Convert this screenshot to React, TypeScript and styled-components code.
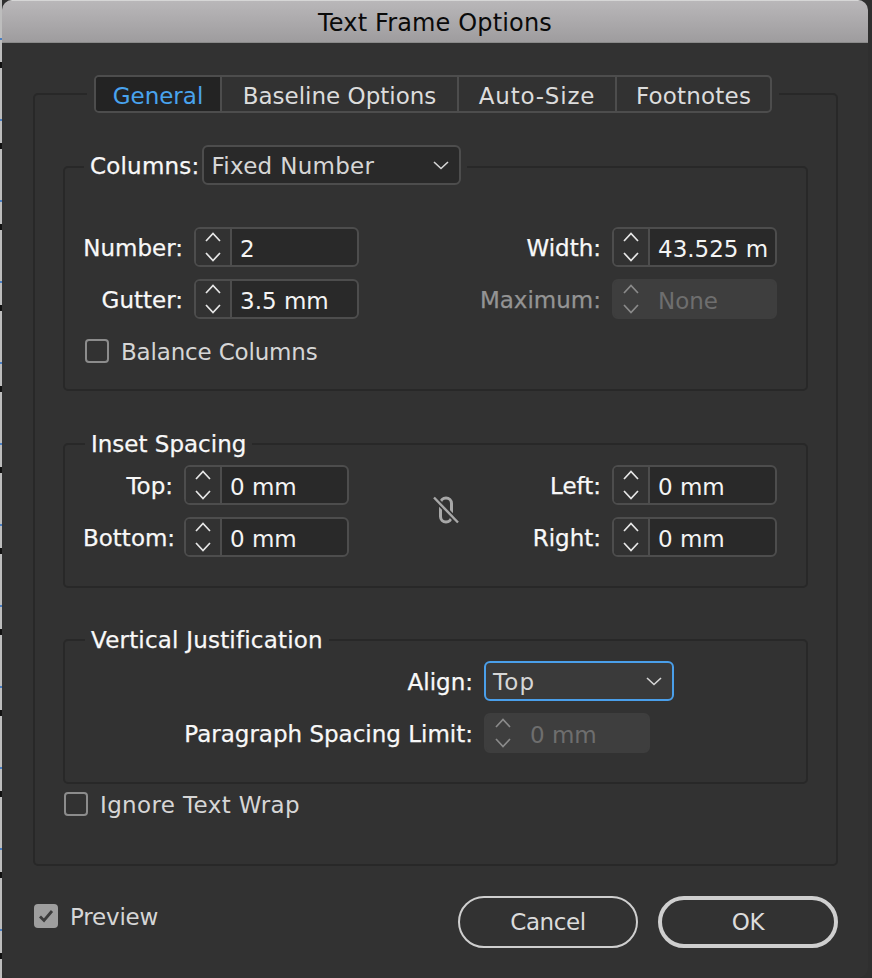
import React from "react";
import styled, { createGlobalStyle } from "styled-components";

const GlobalStyle = createGlobalStyle`
  html,
  body {
    margin: 0;
    padding: 0;
    background: #2f2f2f;
  }

  body {
    font-family: "DejaVu Sans", "Liberation Sans", sans-serif;
  }
`;

const UpDown = () => (
  <StepIcon width="22" height="34" viewBox="0 0 22 34" fill="none">
    <path d="M4 11 L11 3.5 L18 11" />
    <path d="M4 23 L11 30.5 L18 23" />
  </StepIcon>
);

const Spinner = ({
  value,
  width = 165,
  disabled = false,
}: {
  value: string;
  width?: number;
  disabled?: boolean;
}) => (
  <SpinnerBox $width={width} $disabled={disabled}>
    <Stepper $disabled={disabled}>
      <UpDown />
    </Stepper>
    <SpinnerValue $disabled={disabled}>{value}</SpinnerValue>
  </SpinnerBox>
);

const Chevron = () => (
  <svg width="16" height="10" viewBox="0 0 16 10" fill="none">
    <path d="M1 2 L8 8.5 L15 2" stroke="#d6d6d6" strokeWidth="1.6" />
  </svg>
);

const App = () => (
  <>
    <GlobalStyle />
    <Page>
      <Window>
        <TitleBar>Text Frame Options</TitleBar>
        <Body>
          <OuterGroup>
            <TabsLegend>
              <Tabs>
                <Tab $active $width={124}>General</Tab>
                <Tab $width={237}>Baseline Options</Tab>
                <Tab $width={158} $tracking={0.8}>Auto-Size</Tab>
                <Tab $width={155} $tracking={0.2}>Footnotes</Tab>
              </Tabs>
            </TabsLegend>

            <Group $top={32}>
              <SelectLegend>
                <LegendLabel>Columns:</LegendLabel>
                <Select $width={259} $tracking={0.3}>
                  <SelectText>Fixed Number</SelectText>
                  <Chevron />
                </Select>
              </SelectLegend>
              <GroupBody $top={38} $bottom={27} $left={18}>
                <TwoSides>
                  <FieldStack>
                    <Field $labelWidth={100}>
                      <Label>Number:</Label>
                      <Spinner value="2" />
                    </Field>
                    <Field $labelWidth={100}>
                      <Label>Gutter:</Label>
                      <Spinner value="3.5 mm" />
                    </Field>
                  </FieldStack>
                  <FieldStack>
                    <Field $labelWidth={129}>
                      <Label>Width:</Label>
                      <Spinner value="43.525 m" />
                    </Field>
                    <Field $labelWidth={129}>
                      <Label $disabled>Maximum:</Label>
                      <Spinner value="None" disabled />
                    </Field>
                  </FieldStack>
                </TwoSides>
                <CheckRow $top={21} $left={2}>
                  <CheckBox />
                  <CheckText $tracking={-0.17}>Balance Columns</CheckText>
                </CheckRow>
              </GroupBody>
            </Group>

            <Group $top={39}>
              <TextLegend>Inset Spacing</TextLegend>
              <GroupBody $top={7} $bottom={29} $left={18}>
                <TwoSides>
                  <FieldStack>
                    <Field $labelWidth={90}>
                      <Label>Top:</Label>
                      <Spinner value="0 mm" />
                    </Field>
                    <Field $labelWidth={90}>
                      <Label>Bottom:</Label>
                      <Spinner value="0 mm" />
                    </Field>
                  </FieldStack>
                  <LinkSlot>
                    <svg width="26" height="28" viewBox="0 0 26 28" fill="none">
                      <rect x="7.5" y="2" width="11" height="24" rx="5.5" stroke="#a8a8a8" strokeWidth="3" />
                      <path d="M1 1.5 L25 26.5" stroke="#323232" strokeWidth="5.5" />
                      <path d="M1 1.5 L25 26.5" stroke="#a8a8a8" strokeWidth="2.4" />
                    </svg>
                  </LinkSlot>
                  <FieldStack>
                    <Field $labelWidth={129}>
                      <Label>Left:</Label>
                      <Spinner value="0 mm" />
                    </Field>
                    <Field $labelWidth={129}>
                      <Label>Right:</Label>
                      <Spinner value="0 mm" />
                    </Field>
                  </FieldStack>
                </TwoSides>
              </GroupBody>
            </Group>

            <Group $top={38}>
              <TextLegend $tracking={0.2}>Vertical Justification</TextLegend>
              <GroupBody $top={7} $bottom={29} $left={0}>
                <FieldStack>
                  <Field $labelWidth={408}>
                    <Label>Align:</Label>
                    <Select $width={190} $focused $tracking={1.2}>
                      <SelectText>Top</SelectText>
                      <Chevron />
                    </Select>
                  </Field>
                  <Field $labelWidth={408}>
                    <Label>Paragraph Spacing Limit:</Label>
                    <Spinner value="0 mm" width={166} disabled />
                  </Field>
                </FieldStack>
              </GroupBody>
            </Group>

            <CheckRow $top={9} $left={29} $bottom={49}>
              <CheckBox />
              <CheckText $tracking={0.37}>Ignore Text Wrap</CheckText>
            </CheckRow>
          </OuterGroup>

          <Footer>
            <PreviewRow>
              <PreviewBox>
                <svg width="16" height="14" viewBox="0 0 16 14" fill="none">
                  <path d="M2 7.5 L6 11.5 L14 2" stroke="#3c3c3c" strokeWidth="2.8" />
                </svg>
              </PreviewBox>
              <CheckText $tracking={-0.2}>Preview</CheckText>
            </PreviewRow>
            <Buttons>
              <PillButton>Cancel</PillButton>
              <PillButton $primary>OK</PillButton>
            </Buttons>
          </Footer>
        </Body>
      </Window>
    </Page>
  </>
);

const Page = styled.div`
  width: 872px;
  height: 978px;
  padding-left: 2px;
  box-sizing: border-box;
  overflow: hidden;
  /* the document behind the dialog shows as a thin strip of ruler marks */
  background:
    repeating-linear-gradient(
      to bottom,
      transparent 0,
      transparent 38px,
      #4a7fc4 38px,
      #4a7fc4 40px,
      transparent 40px,
      transparent 62px,
      #111 62px,
      #111 68px,
      transparent 68px,
      transparent 81px
    ) left / 2px 100% no-repeat,
    linear-gradient(#bdbdbd, #bdbdbd) left / 2px 100% no-repeat,
    #2f2f2f;
`;

const Window = styled.div`
  display: flex;
  flex-direction: column;
  width: 866px;
  height: 978px;
  border-radius: 10px;
  background: #323232;
  overflow: hidden;
`;

const TitleBar = styled.div`
  flex: none;
  height: 43px;
  border-top: 1px solid #d6d6d6;
  border-bottom: 1px solid #8a8a8a;
  box-sizing: border-box;
  background: linear-gradient(#b9b7b9, #9e9c9e);
  color: #0a0a0a;
  font-size: 24px;
  line-height: 44px;
  letter-spacing: 0.15px;
  text-align: center;
`;

const Body = styled.div`
  display: flex;
  flex: 1;
  flex-direction: column;
  padding: 32px 30px 0 31px;
`;

const OuterGroup = styled.fieldset`
  margin: 0;
  padding: 0;
  min-width: 0;
  border: 2px solid #282828;
  border-radius: 5px;
`;

const TabsLegend = styled.legend`
  margin-left: 52px;
  padding: 0 7px;
`;

const Tabs = styled.div`
  display: flex;
  height: 38px;
  box-sizing: border-box;
  border: 2px solid #4d4d4d;
  border-radius: 5px;
  overflow: hidden;
`;

const Tab = styled.div<{ $active?: boolean; $width: number; $tracking?: number }>`
  width: ${(p) => p.$width}px;
  box-sizing: border-box;
  border-left: ${(p) => (p.$active ? "0" : "2px solid #4d4d4d")};
  background: ${(p) => (p.$active ? "#232323" : "transparent")};
  color: ${(p) => (p.$active ? "#49a3ee" : "#dcdcdc")};
  font-size: 23px;
  line-height: 38px;
  letter-spacing: ${(p) => p.$tracking ?? 0}px;
  text-align: center;
  white-space: nowrap;
`;

const Group = styled.fieldset<{ $top: number }>`
  margin: ${(p) => p.$top}px 28px 0 28px;
  padding: 0;
  min-width: 0;
  border: 2px solid #282828;
  border-radius: 5px;
`;

/* the border runs a little below the middle of the dropdown, hence the 4px */
const SelectLegend = styled.legend`
  display: flex;
  align-items: center;
  gap: 3px;
  margin-left: 19px;
  padding: 0 6px 4px;
`;

const LegendLabel = styled.span`
  padding-top: 2px;
  color: #f8f8f8;
  font-size: 23px;
  letter-spacing: 0.2px;
  white-space: nowrap;
  -webkit-text-stroke: 0.25px #f8f8f8;
`;

const TextLegend = styled.legend<{ $tracking?: number }>`
  margin-left: 20px;
  padding: 0 6px;
  color: #f8f8f8;
  font-size: 23px;
  line-height: 28px;
  letter-spacing: ${(p) => p.$tracking ?? 0}px;
  white-space: nowrap;
  -webkit-text-stroke: 0.25px #f8f8f8;
`;

const GroupBody = styled.div<{ $top: number; $bottom: number; $left: number }>`
  padding: ${(p) => p.$top}px 29px ${(p) => p.$bottom}px ${(p) => p.$left}px;
`;

const TwoSides = styled.div`
  display: flex;
  align-items: center;
  justify-content: space-between;
`;

const FieldStack = styled.div`
  display: flex;
  flex-direction: column;
  gap: 12px;
`;

const Field = styled.div<{ $labelWidth: number }>`
  display: grid;
  grid-template-columns: ${(p) => p.$labelWidth}px auto;
  column-gap: 11px;
  align-items: center;
  justify-content: start;
`;

const Label = styled.span<{ $disabled?: boolean }>`
  padding-top: 2px;
  color: ${(p) => (p.$disabled ? "#949494" : "#f8f8f8")};
  font-size: 23px;
  text-align: right;
  white-space: nowrap;
  -webkit-text-stroke: 0.25px ${(p) => (p.$disabled ? "#949494" : "#f8f8f8")};
`;

const SpinnerBox = styled.div<{ $width: number; $disabled: boolean }>`
  display: flex;
  width: ${(p) => p.$width}px;
  height: 40px;
  box-sizing: border-box;
  border: 2px solid ${(p) => (p.$disabled ? "#3e3e3e" : "#4d4d4d")};
  border-radius: 6px;
  background: ${(p) => (p.$disabled ? "#3e3e3e" : "#292929")};
  overflow: hidden;
`;

const Stepper = styled.div<{ $disabled: boolean }>`
  display: flex;
  flex: none;
  align-items: center;
  justify-content: center;
  width: 34px;
  border-right: 2px solid ${(p) => (p.$disabled ? "#3e3e3e" : "#4d4d4d")};
  background: ${(p) => (p.$disabled ? "#3e3e3e" : "#323232")};
  color: ${(p) => (p.$disabled ? "#8a8a8a" : "#e6e6e6")};
`;

const StepIcon = styled.svg`
  path {
    stroke: currentColor;
    stroke-width: 1.7;
  }
`;

const SpinnerValue = styled.div<{ $disabled: boolean }>`
  padding-left: 8px;
  color: ${(p) => (p.$disabled ? "#6e6e6e" : "#f4f4f4")};
  font-size: 23px;
  line-height: 41px;
  white-space: nowrap;
`;

const Select = styled.div<{ $width: number; $focused?: boolean; $tracking: number }>`
  display: flex;
  align-items: center;
  justify-content: space-between;
  width: ${(p) => p.$width}px;
  height: 40px;
  padding: 0 10px 0 7px;
  box-sizing: border-box;
  border: 2px solid ${(p) => (p.$focused ? "#4a9fea" : "#4d4d4d")};
  border-radius: 6px;
  background: ${(p) => (p.$focused ? "#3a3a3a" : "#292929")};
  color: #d6d6d6;
  font-size: 23px;
  letter-spacing: ${(p) => p.$tracking}px;
  white-space: nowrap;
`;

const SelectText = styled.span`
  padding-top: 2px;
`;

const CheckRow = styled.div<{ $top: number; $left: number; $bottom?: number }>`
  display: flex;
  align-items: center;
  gap: 12px;
  margin: ${(p) => p.$top}px 0 ${(p) => p.$bottom ?? 0}px ${(p) => p.$left}px;
  height: 22px;
`;

const CheckBox = styled.div`
  flex: none;
  width: 24px;
  height: 24px;
  box-sizing: border-box;
  border: 2px solid #8c8c8c;
  border-radius: 4px;
`;

const CheckText = styled.span<{ $tracking: number }>`
  padding-top: 2px;
  color: #d6d6d6;
  font-size: 23px;
  letter-spacing: ${(p) => p.$tracking}px;
  white-space: nowrap;
`;

const LinkSlot = styled.div`
  display: flex;
  align-items: center;
  justify-content: center;
  margin: 0 0 2px 71px;
`;

const Footer = styled.div`
  display: flex;
  align-items: center;
  justify-content: space-between;
  margin-top: 30px;
  height: 52px;
`;

const PreviewRow = styled.div`
  display: flex;
  align-items: center;
  gap: 12px;
  margin: 0 0 12px 1px;
`;

const PreviewBox = styled.div`
  display: flex;
  align-items: center;
  justify-content: center;
  width: 24px;
  height: 24px;
  border-radius: 4px;
  background: #9e9e9e;
`;

const Buttons = styled.div`
  display: flex;
  gap: 20px;
`;

const PillButton = styled.button<{ $primary?: boolean }>`
  width: 180px;
  height: 52px;
  padding: 0;
  box-sizing: border-box;
  border: ${(p) => (p.$primary ? "4px" : "2px")} solid #cfcfcf;
  border-radius: 26px;
  background: transparent;
  color: #dcdcdc;
  font-family: inherit;
  font-size: 23px;
  letter-spacing: -0.4px;
`;

export default App;
